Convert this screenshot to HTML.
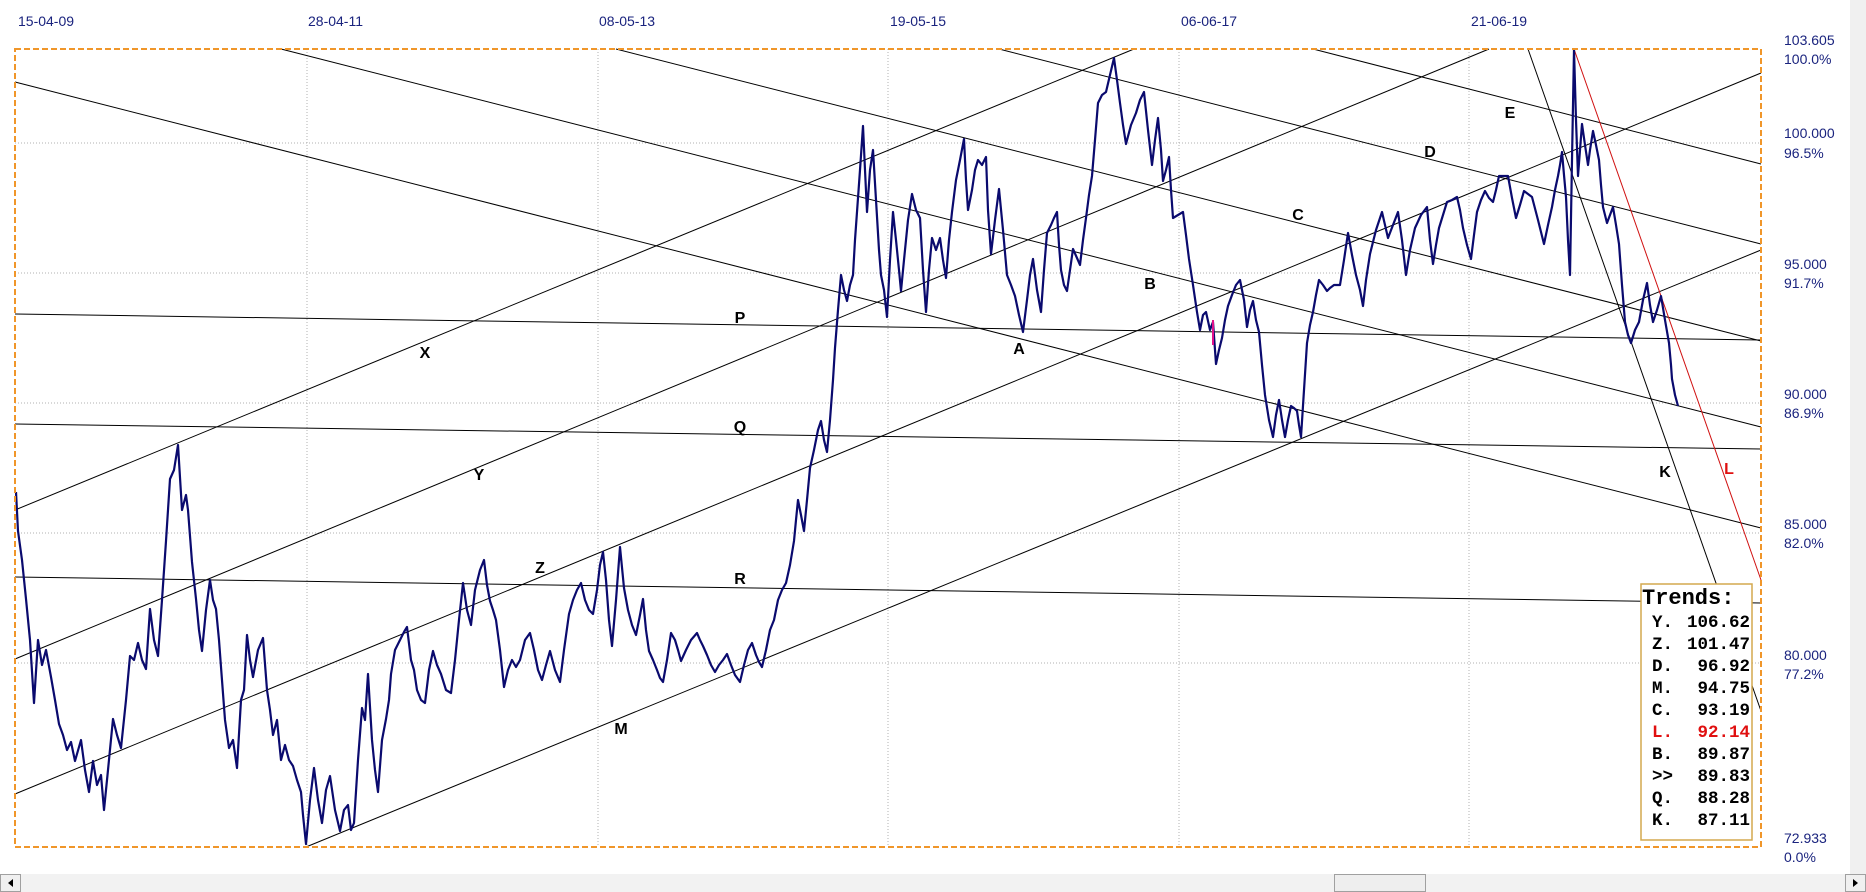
<!DOCTYPE html>
<html><head><meta charset="utf-8"><style>
html,body{margin:0;padding:0;background:#fff;width:1866px;height:892px;overflow:hidden}
svg{display:block}
</style></head><body>
<svg width="1866" height="892" viewBox="0 0 1866 892" xmlns="http://www.w3.org/2000/svg">
<rect x="0" y="0" width="1866" height="892" fill="#fff"/>
<rect x="1850" y="0" width="16" height="874" fill="#f0f0f0"/>
<!-- grid -->
<g stroke="#b0b0b0" stroke-width="1" stroke-dasharray="1,2">
<line x1="307" y1="49" x2="307" y2="847"/><line x1="598" y1="49" x2="598" y2="847"/>
<line x1="888" y1="49" x2="888" y2="847"/><line x1="1179" y1="49" x2="1179" y2="847"/>
<line x1="1469" y1="49" x2="1469" y2="847"/>
<line x1="15" y1="143" x2="1761" y2="143"/><line x1="15" y1="273" x2="1761" y2="273"/>
<line x1="15" y1="403" x2="1761" y2="403"/><line x1="15" y1="533" x2="1761" y2="533"/>
<line x1="15" y1="663" x2="1761" y2="663"/>
</g>
<!-- trend lines -->
<g stroke="#000" stroke-width="1" fill="none">
<line x1="281" y1="49" x2="1761" y2="427"/>
<line x1="15" y1="82" x2="1761" y2="528"/>
<line x1="1313" y1="49" x2="1761" y2="164"/>
<line x1="999" y1="49" x2="1761" y2="244"/>
<line x1="616" y1="49" x2="1761" y2="341"/>
<line x1="15" y1="510" x2="1134" y2="49"/>
<line x1="15" y1="659" x2="1489" y2="49"/>
<line x1="15" y1="794" x2="1761" y2="73"/>
<line x1="306" y1="847" x2="1761" y2="250"/>
<line x1="15" y1="314" x2="1761" y2="340"/>
<line x1="15" y1="424" x2="1761" y2="449"/>
<line x1="15" y1="577" x2="1761" y2="603"/>
<line x1="1528" y1="49" x2="1761" y2="711"/>
</g>
<line x1="1574" y1="49" x2="1761" y2="580" stroke="#d01010" stroke-width="1"/>
<!-- price -->
<polyline fill="none" stroke="#0a0a6e" stroke-width="2.2" stroke-linejoin="round" points="
16,492 18,531 22,560 26,599 30,640 34,703 38,640 42,665 46,650 51,677 55,700 59,724 63,735 67,750 71,742 75,761 81,740 85,770 89,792 93,761 97,785 101,775 104,810 108,770 113,719 117,735 121,748 126,700 130,656 134,660 138,643 142,660 146,669 150,609 154,640 158,656 162,600 166,541 170,479 174,470 178,445 182,510 186,495 188,510 192,562 196,599 199,630 202,651 206,610 210,580 213,600 216,609 219,640 221,667 225,720 229,748 233,740 237,768 241,700 244,690 247,635 250,660 253,677 258,650 263,638 267,690 270,710 273,735 277,720 281,760 285,745 289,760 293,766 297,780 301,792 303,815 306,844 310,800 314,768 318,800 322,823 326,790 330,776 335,810 340,831 344,810 348,805 351,830 354,823 358,760 362,708 365,720 368,674 372,740 375,770 378,792 382,740 386,719 389,700 391,674 395,650 400,640 404,632 407,627 411,660 414,670 417,690 421,700 425,703 429,670 433,651 437,665 441,674 446,690 451,693 455,660 459,620 463,583 467,610 471,625 475,590 480,570 484,560 487,585 490,601 493,610 496,620 500,650 504,687 508,670 512,660 516,667 520,660 525,640 530,633 534,650 538,670 542,680 546,665 550,651 555,670 560,682 564,650 569,614 573,600 577,590 581,583 585,600 589,610 593,614 597,590 600,565 603,552 606,580 609,620 612,646 616,600 620,547 624,588 628,610 632,625 636,635 640,615 643,599 646,630 649,651 653,660 657,670 660,678 663,682 667,660 671,633 675,640 678,650 681,661 686,650 691,640 697,633 700,640 703,646 707,655 711,665 715,672 719,665 723,660 727,654 731,665 735,675 740,682 744,665 748,650 752,643 756,655 759,662 762,667 766,650 770,630 774,620 778,600 782,590 786,583 790,565 794,541 796,520 798,500 801,515 804,531 807,500 810,468 814,450 818,430 821,421 824,440 827,452 830,420 833,380 835,348 838,310 841,275 844,290 847,301 850,285 853,275 855,240 857,212 860,170 863,126 865,170 867,212 870,170 873,150 876,200 879,250 881,275 884,290 887,317 890,260 893,212 896,240 899,270 901,291 904,260 908,220 912,194 916,210 920,218 923,270 926,312 929,270 932,238 936,250 940,238 943,260 946,278 949,240 952,212 956,180 960,160 964,139 966,180 968,210 972,190 975,170 978,160 982,165 986,157 988,210 991,254 995,220 999,189 1003,230 1007,275 1011,285 1015,296 1019,315 1023,332 1027,300 1030,275 1033,259 1037,290 1041,312 1044,270 1047,233 1051,225 1054,218 1057,212 1059,245 1061,270 1064,285 1067,291 1070,270 1073,249 1077,258 1080,265 1083,240 1086,218 1089,195 1092,176 1095,140 1098,103 1102,95 1106,92 1110,75 1114,58 1117,80 1120,103 1123,125 1126,144 1131,125 1136,113 1140,100 1144,92 1148,130 1152,165 1155,140 1158,118 1161,150 1163,181 1166,170 1169,157 1171,190 1173,218 1178,215 1183,212 1186,235 1189,259 1193,285 1197,312 1200,330 1203,315 1206,312 1210,330 1213,322 1216,364 1219,350 1222,338 1225,320 1228,306 1232,295 1236,285 1240,280 1244,300 1247,327 1250,310 1253,301 1256,320 1259,332 1262,365 1265,395 1269,420 1273,437 1276,415 1279,400 1282,420 1285,437 1288,420 1291,406 1294,408 1297,411 1299,425 1301,437 1304,390 1307,343 1310,325 1313,312 1316,295 1319,280 1323,285 1327,291 1330,288 1334,285 1337,285 1340,285 1344,260 1348,233 1352,255 1356,275 1360,290 1363,306 1366,280 1370,254 1376,230 1382,212 1385,225 1388,238 1393,225 1398,212 1402,240 1406,275 1410,250 1415,228 1421,215 1427,207 1430,240 1433,264 1436,245 1439,228 1443,215 1447,202 1452,200 1457,197 1460,210 1463,228 1467,245 1471,259 1474,235 1477,212 1481,200 1485,191 1489,198 1493,202 1496,190 1499,176 1504,176 1508,176 1512,198 1516,218 1520,205 1524,191 1528,194 1532,197 1538,220 1544,244 1548,225 1552,207 1555,190 1558,176 1560,165 1562,152 1564,175 1566,197 1568,240 1570,275 1572,160 1574,50 1576,120 1578,176 1580,150 1582,124 1585,145 1588,165 1590,150 1593,131 1596,145 1599,160 1601,185 1603,207 1605,215 1607,223 1610,215 1613,207 1616,225 1619,244 1622,285 1625,322 1628,335 1631,343 1635,330 1639,322 1643,300 1647,283 1650,305 1653,322 1657,310 1661,296 1665,320 1669,343 1671,365 1672,379 1675,395 1678,406"/>
<line x1="1213" y1="320" x2="1213" y2="345" stroke="#e0108a" stroke-width="2"/>
<!-- frame -->
<rect x="15" y="49" width="1746" height="798" fill="none" stroke="#f0962a" stroke-width="2" stroke-dasharray="6,3"/>
<!-- labels -->
<g font-family="Liberation Sans, sans-serif" font-weight="bold" font-size="16" fill="#000" text-anchor="middle">
<text x="425" y="358">X</text><text x="479" y="480">Y</text><text x="540" y="573">Z</text>
<text x="621" y="734">M</text><text x="740" y="323">P</text><text x="740" y="432">Q</text>
<text x="740" y="584">R</text><text x="1019" y="354">A</text><text x="1150" y="289">B</text>
<text x="1298" y="220">C</text><text x="1430" y="157">D</text><text x="1510" y="118">E</text>
<text x="1665" y="477">K</text><text x="1729" y="474" fill="#e01010">L</text>
</g>
<!-- dates -->
<g font-family="Liberation Sans, sans-serif" font-size="14" fill="#1a237e">
<text x="18" y="26">15-04-09</text><text x="308" y="26">28-04-11</text>
<text x="599" y="26">08-05-13</text><text x="890" y="26">19-05-15</text>
<text x="1181" y="26">06-06-17</text><text x="1471" y="26">21-06-19</text>
</g>
<!-- right axis -->
<g font-family="Liberation Sans, sans-serif" font-size="14" fill="#1a237e">
<text x="1784" y="45">103.605</text><text x="1784" y="64">100.0%</text>
<text x="1784" y="138">100.000</text><text x="1784" y="158">96.5%</text>
<text x="1784" y="269">95.000</text><text x="1784" y="288">91.7%</text>
<text x="1784" y="399">90.000</text><text x="1784" y="418">86.9%</text>
<text x="1784" y="529">85.000</text><text x="1784" y="548">82.0%</text>
<text x="1784" y="660">80.000</text><text x="1784" y="679">77.2%</text>
<text x="1784" y="843">72.933</text><text x="1784" y="862">0.0%</text>
</g>
<!-- trends box -->
<rect x="1641" y="584" width="111" height="256" fill="#fff" stroke="#d4a84e" stroke-width="1.5"/>
<g font-family="Liberation Mono, monospace" font-weight="bold" fill="#000">
<text x="1642" y="604" font-size="22">Trends:</text>
<g font-size="17.5">
<text x="1652" y="627">Y.</text><text x="1750" y="627" text-anchor="end">106.62</text>
<text x="1652" y="649">Z.</text><text x="1750" y="649" text-anchor="end">101.47</text>
<text x="1652" y="671">D.</text><text x="1750" y="671" text-anchor="end">96.92</text>
<text x="1652" y="693">M.</text><text x="1750" y="693" text-anchor="end">94.75</text>
<text x="1652" y="715">C.</text><text x="1750" y="715" text-anchor="end">93.19</text>
<text x="1652" y="737" fill="#e01010">L.</text><text x="1750" y="737" text-anchor="end" fill="#e01010">92.14</text>
<text x="1652" y="759">B.</text><text x="1750" y="759" text-anchor="end">89.87</text>
<text x="1652" y="781">&gt;&gt;</text><text x="1750" y="781" text-anchor="end">89.83</text>
<text x="1652" y="803">Q.</text><text x="1750" y="803" text-anchor="end">88.28</text>
<text x="1652" y="825">K.</text><text x="1750" y="825" text-anchor="end">87.11</text>
</g></g>
<!-- scrollbar -->
<rect x="0" y="874" width="1866" height="18" fill="#f2f2f2"/>
<rect x="0.5" y="874.5" width="20" height="17" fill="#f0f0f0" stroke="#a0a0a0"/>
<polygon points="13,879 8,883 13,887" fill="#000"/>
<rect x="1334.5" y="874.5" width="91" height="17" fill="#eeeeee" stroke="#a0a0a0"/>
<rect x="1845.5" y="874.5" width="20" height="17" fill="#f0f0f0" stroke="#a0a0a0"/>
<polygon points="1853,879 1858,883 1853,887" fill="#000"/>
</svg>
</body></html>
